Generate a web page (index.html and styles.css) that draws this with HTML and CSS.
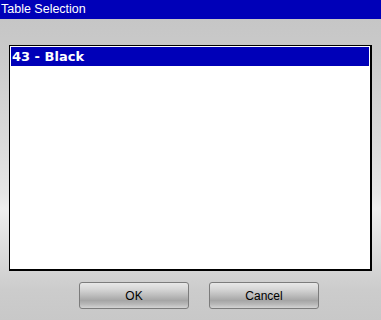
FILE: index.html
```html
<!DOCTYPE html>
<html lang="en">
  <head>
    <meta charset="UTF-8" />
    <title>Table Selection</title>
    <link rel="stylesheet" href="styles.css">
  </head>
  <body>
    <div class="dialog">
      <div class="title-bar">Table Selection</div>

      <div class="dialog-body">
        <div class="list-box">
          <div class="list-item selected">43 - Black</div>
        </div>

        <div class="buttons">
          <button class="btn">OK</button>
          <button class="btn">Cancel</button>
        </div>
      </div>
    </div>
  </body>
</html>
```

FILE: styles.css
```css
* {
  margin: 0;
  padding: 0;
  box-sizing: border-box;
}

body {
  width: 381px;
  height: 320px;
  overflow: hidden;
  font-family: "DejaVu Sans", sans-serif;
}

.dialog {
  display: flex;
  flex-direction: column;
  height: 320px;
}

.title-bar {
  height: 19px;
  background: #0000b8;
  color: #ffffff;
  font-family: "Liberation Sans", Arial, sans-serif;
  font-size: 12.5px;
  line-height: 19px;
  padding-left: 1px;
}

.dialog-body {
  flex: 1;
  padding: 26px 9px 0 9px;
  background: linear-gradient(
    180deg,
    #c6c6c6 0%,
    #c9c9c9 10%,
    #dadada 40%,
    #e6e6e6 58%,
    #eeeeee 63%,
    #e2e2e2 72%,
    #d6d6d6 82%,
    #cccccc 90%,
    #c8c8c8 100%
  );
}

.list-box {
  height: 226px;
  background: #ffffff;
  border: 1px solid #000000;
  border-right-width: 2px;
  border-bottom-width: 2px;
  padding: 1px;
}

.list-item {
  height: 19px;
  line-height: 19px;
  font-size: 13px;
  font-weight: bold;
  padding-left: 1px;
}

.list-item.selected {
  background: #0000b8;
  color: #ffffff;
}

.buttons {
  display: flex;
  gap: 20px;
  padding-left: 70px;
  margin-top: 11px;
}

.btn {
  width: 110px;
  height: 27px;
  border: 1px solid #7c7c7c;
  border-radius: 3px;
  font-family: "Liberation Sans", Arial, sans-serif;
  font-size: 12px;
  color: #000000;
  background: linear-gradient(
    180deg,
    #e8e8e8 0%,
    #d6d6d6 25%,
    #bcbcbc 50%,
    #a6a6a6 70%,
    #b8b8b8 85%,
    #d4d4d4 100%
  );
}
```
